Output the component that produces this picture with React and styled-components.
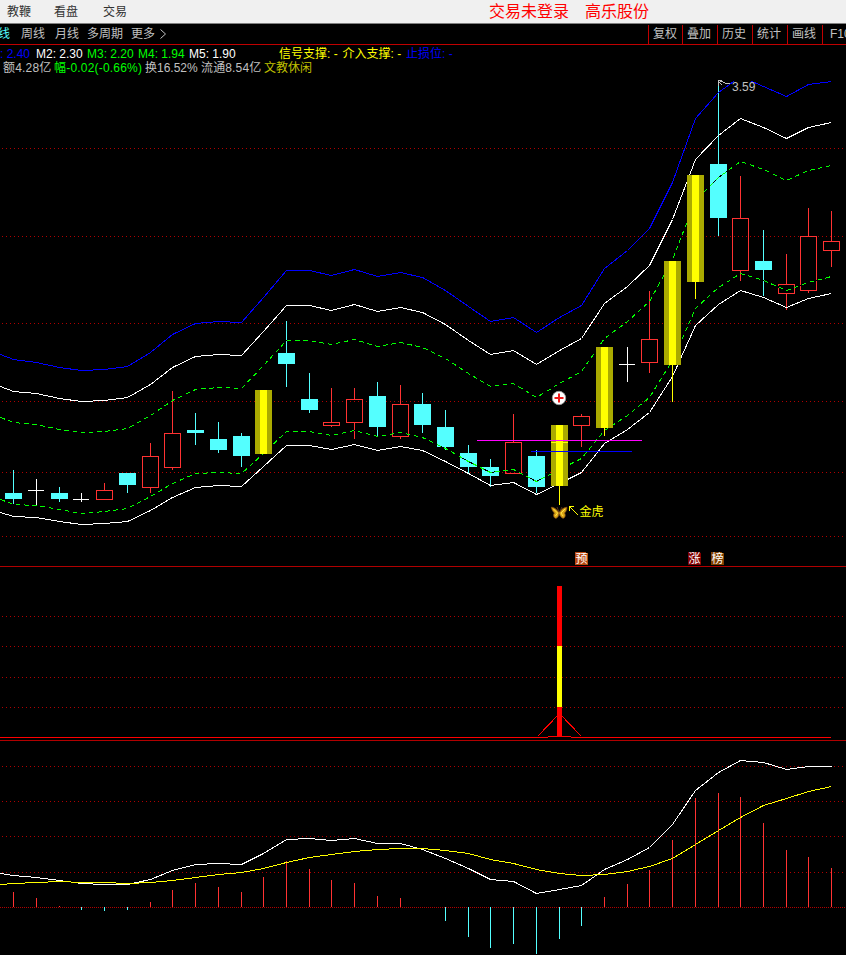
import React, { Component } from 'react'

import styled, { createGlobalStyle } from 'styled-components'

const GlobalStyle = createGlobalStyle`
  body {
    margin: 0;
    background: #000;
    overflow: hidden;
  }
`

const Screen = styled.div`
  width: 846px;
  height: 955px;
  display: flex;
  flex-direction: column;
  overflow: hidden;
  background: #000;
  color: #c0c0c0;
  font-family: 'Liberation Sans', 'Noto Sans CJK SC', sans-serif;
  font-size: 12px;
  line-height: 14px;
  white-space: pre;
`

const MenuBar = styled.header`
  display: flex;
  flex: none;
  align-items: center;
  box-sizing: border-box;
  height: 24px;
  padding: 1px 0 0 7px;
  background: #f0f0f0;
  border-bottom: 1px solid #808080;
  color: #333;
`

const MenuItem = styled.span`
  flex: none;
  width: ${props => props.$width}px;
`

const Title = styled.span`
  display: flex;
  gap: 16px;
  margin-left: 338px;
  color: #f00;
  font-size: 16px;
  line-height: 22px;
`

const ToolBar = styled.nav`
  display: flex;
  flex: none;
  justify-content: space-between;
  box-sizing: border-box;
  height: 21px;
  border-bottom: 1px solid #c00000;
`

const Periods = styled.div`
  display: flex;
  align-items: center;
  margin-left: -2px;
`

const Period = styled.span`
  margin-right: ${props => props.$gap}px;
  color: ${props => props.$active ? '#54ffff' : '#c0c0c0'};
`

const Tools = styled.div`
  display: flex;
  width: 198px;
  padding-top: 1px;
  overflow: hidden;
`

const Tool = styled.span`
  flex: none;
  box-sizing: border-box;
  width: ${props => props.$width || 35}px;
  padding-left: ${props => props.$inset || 4}px;
  border-left: 1px solid #c00000;
  line-height: 18px;
`

const Legend = styled.div`
  display: flex;
  flex: none;
  flex-direction: column;
  box-sizing: border-box;
  height: 29px;
  padding-top: 2px;
`

const LegendRow = styled.div`
  display: flex;
  flex: none;
  height: 14px;
  padding-left: ${props => props.$inset || 0}px;
`

const Value = styled.span`
  flex: none;
  width: ${props => props.$width}px;
  color: ${props => props.$color};
  letter-spacing: ${props => props.$spacing || 0}px;
`

const Panel = styled.section`
  flex: none;
  height: ${props => props.$height}px;
  border-bottom: ${props => props.$last ? 'none' : '1px solid #b00000'};
`

const Chart = styled.svg`
  display: block;
  shape-rendering: crispEdges;
`

const Curve = styled.polyline`
  fill: none;
  stroke: ${props => props.$color};
  stroke-width: 1;
  stroke-dasharray: ${props => props.$dashed ? '4.5 3.7' : 'none'};
`

const ChartText = styled.text`
  font-size: 12px;
  fill: ${props => props.$color};
`

const RED = '#ff3232'
const CYAN = '#54ffff'

// centre pixel of every trading day
const DAYS = [
  13, 36, 59, 81, 104, 127, 150, 172, 195, 218, 241, 263, 286, 309, 331, 354, 377, 400, 422,
  445, 468, 490, 513, 536, 559, 581, 604, 627, 649, 672, 695, 718, 740, 763, 786, 808, 831
]

// kind, high, body top, body bottom, low
const CANDLES = [
  ['down', 470, 493, 499, 505],
  ['flat', 479, 490, 491, 505],
  ['down', 487, 493, 499, 502],
  ['flat', 493, 499, 500, 502],
  ['up', 483, 490, 500, 500],
  ['down', 473, 473, 485, 493],
  ['up', 443, 456, 488, 493],
  ['up', 391, 433, 468, 470],
  ['down', 413, 430, 433, 445],
  ['down', 422, 439, 450, 453],
  ['down', 433, 436, 456, 467],
  ['limit', 390, 390, 454, 454],
  ['down', 321, 353, 364, 387],
  ['down', 373, 399, 410, 413],
  ['up', 388, 422, 426, 427],
  ['up', 388, 399, 423, 439],
  ['down', 382, 396, 427, 436],
  ['up', 385, 404, 437, 439],
  ['down', 393, 404, 425, 433],
  ['down', 410, 427, 447, 450],
  ['down', 445, 453, 467, 473],
  ['down', 459, 467, 476, 487],
  ['up', 414, 442, 474, 474],
  ['down', 450, 456, 487, 493],
  ['limit', 425, 425, 486, 505],
  ['up', 414, 416, 426, 447],
  ['limit', 347, 347, 428, 436],
  ['flat', 347, 364, 365, 382],
  ['up', 291, 339, 363, 373],
  ['limit', 261, 261, 365, 402],
  ['limit', 175, 175, 282, 299],
  ['down', 82, 164, 218, 236],
  ['up', 176, 218, 271, 281],
  ['down', 230, 261, 270, 296],
  ['up', 254, 284, 294, 310],
  ['up', 208, 236, 291, 293],
  ['up', 211, 241, 251, 267]
]

// the first value of each curve is where it enters at the left edge
const TOP_BAND = [
  354, 359, 362, 367, 370, 369, 366, 352, 334, 323, 321, 322, 297, 270, 270, 275, 269, 276, 272, 277,
  290, 306, 321, 317, 332, 317, 305, 268, 250, 228, 182, 118, 92, 76, 86, 96, 84, 81
]
const UPPER_BAND = [
  386, 391, 393, 398, 401, 400, 397, 384, 367, 356, 354, 355, 331, 305, 305, 310, 304, 311, 307, 312,
  324, 340, 354, 350, 364, 350, 338, 303, 286, 265, 219, 159, 135, 118, 127, 138, 127, 122
]
const UPPER_MID = [
  417, 422, 424, 429, 432, 431, 428, 415, 400, 389, 387, 388, 365, 340, 340, 344, 339, 346, 342, 347,
  358, 373, 386, 383, 397, 383, 371, 338, 321, 301, 259, 200, 177, 161, 169, 180, 170, 165
]
const LOWER_MID = [
  499, 504, 505, 509, 513, 511, 508, 496, 483, 473, 472, 473, 453, 431, 431, 435, 430, 436, 432, 437,
  448, 461, 472, 469, 481, 469, 458, 430, 415, 397, 360, 308, 287, 273, 280, 290, 282, 276
]
const LOWER_BAND = [
  512, 516, 517, 521, 524, 523, 521, 510, 497, 487, 485, 486, 466, 445, 445, 449, 444, 450, 446, 450,
  461, 473, 485, 482, 494, 483, 472, 443, 429, 412, 376, 325, 304, 290, 297, 307, 298, 293
]
const DIF = [
  873, 875, 877, 880, 883, 884, 884, 879, 870, 864, 863, 864, 853, 839, 838, 840, 838, 843, 843, 849,
  858, 868, 879, 881, 893, 889, 885, 869, 859, 847, 824, 790, 772, 760, 762, 769, 766, 766
]
const DEA = [
  884, 883, 882, 881, 882, 882, 883, 882, 880, 877, 874, 872, 868, 862, 857, 854, 851, 849, 848, 848,
  850, 853, 859, 863, 869, 873, 875, 874, 871, 866, 858, 844, 830, 817, 805, 798, 791, 786
]
const MACD = [
  892, 898, 906, 910, 911, 910, 902, 890, 883, 887, 892, 877, 861, 869, 880, 883, 896, 898, 907,
  921, 937, 948, 944, 954, 939, 926, 897, 884, 870, 840, 798, 793, 797, 823, 850, 857, 868
]

const toPoints = values => values
  .map((y, i) => `${(i ? DAYS[i - 1] : 0) + 0.5},${y + 0.5}`)
  .join(' ')

const GridLines = ({ rows }) => rows.map(y => (
  <line key={y} x1='2' x2='843' y1={y + 0.5} y2={y + 0.5} stroke='#b00000' strokeDasharray='1 3' />
))

const Candle = ({ x, data }) => {
  const [kind, high, top, bottom, low] = data
  const height = bottom - top
  if (kind === 'flat') {
    return (
      <g fill='#fff'>
        <rect x={x} y={high} width='1' height={low - high} />
        <rect x={x - 8} y={top} width='16' height='1' />
      </g>
    )
  }
  if (kind === 'limit') {
    return (
      <g fill='#ff0'>
        <rect x={x} y={high} width='1' height={low - high} />
        <rect x={x - 8} y={top} width='17' height={height} fill='#aaaa00' />
        <rect x={x - 3} y={top} width='7' height={height} />
      </g>
    )
  }
  if (kind === 'up') {
    return (
      <g fill={RED}>
        <rect x={x} y={high} width='1' height={top - high} />
        <rect x={x} y={bottom} width='1' height={low - bottom} />
        <rect x={x - 7.5} y={top + 0.5} width='16' height={height - 1} fill='none' stroke={RED} />
      </g>
    )
  }
  return (
    <g fill={CYAN}>
      <rect x={x} y={high} width='1' height={low - high} />
      <rect x={x - 8} y={top} width='17' height={height} />
    </g>
  )
}

const DashedCurve = ({ values }) => (
  <g>
    <Curve points={toPoints(values)} $color='#000' />
    <Curve points={toPoints(values)} $color='#0f0' $dashed />
  </g>
)

const Tag = ({ x, color, children }) => (
  <g>
    <path d={`M${x} 552h11v1h2v12h-13z`} fill={color} />
    <ChartText x={x + 0.5} y='563' $color='#fff'>{children}</ChartText>
  </g>
)

const CrossMark = () => (
  <g shapeRendering='auto'>
    <circle cx='559' cy='398' r='6.7' fill='#fff' stroke='#999' />
    <path d='M559 393.5v9M554.5 398h9' stroke='#f01818' strokeWidth='2' />
  </g>
)

const Butterfly = () => (
  <g shapeRendering='auto'>
    <path d='M558.5 512C556 508.500 553 507 551.300 507.300C552 509.500 552.500 511.500 554.500 513C552.500 515 554 518.500 556 518.300C557.500 518 558.500 516 559.300 514C560.200 516 561.500 518 563 518.200C565 518.300 566 515 564.500 513C566.500 511.500 566.800 509 567 507.300C564.500 507.200 561.500 509 559.800 512z' fill='#dba514' stroke='#865016' strokeWidth='.8' />
    <path d='M553.5 509l4 4-2 3M565 509l-4 4 2 3' fill='none' stroke='#ffe14a' />
    <path d='M559 516v-4l-2-5M559.500 512l2.500-5' fill='none' stroke='#70401c' strokeWidth='.8' />
  </g>
)

const PriceChart = () => (
  <Chart width='846' height='492' viewBox='0 74 846 492'>
    <clipPath id='plot'>
      <rect x='0' y='81' width='846' height='485' />
    </clipPath>
    <GridLines rows={[148, 236, 323, 401, 472, 536]} />
    {CANDLES.map((data, i) => data[0] !== 'limit' && <Candle key={i} x={DAYS[i]} data={data} />)}
    <g clipPath='url(#plot)'>
      <Curve points={toPoints(TOP_BAND)} $color='#00f' />
      <Curve points={toPoints(UPPER_BAND)} $color='#fff' />
      <DashedCurve values={UPPER_MID} />
      <DashedCurve values={LOWER_MID} />
      <Curve points={toPoints(LOWER_BAND)} $color='#fff' />
    </g>
    {CANDLES.map((data, i) => data[0] === 'limit' && <Candle key={i} x={DAYS[i]} data={data} />)}
    <rect x='551' y='442' width='17' height='1' fill='#ff0' />
    <rect x='477' y='440' width='165' height='1' fill='#f0f' />
    <rect x='531' y='451' width='101' height='1' fill='#00f' />
    <path d='M718.500 85.500v-5h3M719.500 81.500h3l3 2h4M719 82.500l3 2' fill='none' stroke='#c0c0c0' />
    <ChartText x='732' y='91' $color='#c0c0c0'>3.59</ChartText>
    <CrossMark />
    <Butterfly />
    <path d='M569.500 510.500v-4h4M570 507l8 8' fill='none' stroke='#ff0' />
    <ChartText x='579.500' y='516' $color='#ff0'>金虎</ChartText>
    <Tag x={575} color='#b84810'>预</Tag>
    <Tag x={688} color='#800000'>涨</Tag>
    <Tag x={711} color='#804000'>榜</Tag>
  </Chart>
)

const SignalChart = () => (
  <Chart width='846' height='173' viewBox='0 567 846 173'>
    <GridLines rows={[616, 646, 677, 707]} />
    <path d='M0 737.500H548M571 737.500H831' stroke='#f00' />
    <path d='M537.500 736.500L559.500 713.500L581.500 736.500' fill='none' stroke='#f00' />
    <rect x='548' y='736' width='23' height='1' fill='#f00' />
    <rect x='557' y='586' width='5' height='151' fill='#f00' />
    <rect x='557' y='646' width='5' height='61' fill='#ff0' />
  </Chart>
)

const MacdChart = () => (
  <Chart width='846' height='214' viewBox='0 741 846 214'>
    <GridLines rows={[766, 801, 836, 872]} />
    <line x1='0' x2='846' y1='907.5' y2='907.5' stroke='#b00000' strokeDasharray='1 1' />
    <Curve points={toPoints(DIF)} $color='#fff' />
    {MACD.map((y, i) => (
      <rect
        key={i}
        x={DAYS[i]}
        y={Math.min(y, 907)}
        width='1'
        height={Math.abs(907 - y)}
        fill={y < 907 ? RED : CYAN}
      />
    ))}
    <Curve points={toPoints(DEA)} $color='#ff0' />
  </Chart>
)

class App extends Component {
  render () {
    return (
      <Screen>
        <GlobalStyle />
        <MenuBar>
          <MenuItem $width={47}>教鞭</MenuItem>
          <MenuItem $width={49}>看盘</MenuItem>
          <MenuItem $width={48}>交易</MenuItem>
          <Title>
            <span>交易未登录</span>
            <span>高乐股份</span>
          </Title>
        </MenuBar>
        <ToolBar>
          <Periods>
            <Period $gap={11} $active>线</Period>
            <Period $gap={10}>周线</Period>
            <Period $gap={8}>月线</Period>
            <Period $gap={8}>多周期</Period>
            <Period $gap={4}>更多</Period>
            <svg width='8' height='10' viewBox='0 0 8 10'>
              <path d='M1.500 .5l5 4.500-5 4.500' fill='none' stroke='#c0c0c0' />
            </svg>
          </Periods>
          <Tools>
            <Tool $width={34}>复权</Tool>
            <Tool>叠加</Tool>
            <Tool>历史</Tool>
            <Tool>统计</Tool>
            <Tool>画线</Tool>
            <Tool $inset={7}>F10</Tool>
          </Tools>
        </ToolBar>
        <Legend>
          <LegendRow>
            <Value $color='#00f' $width={36}>: 2.40</Value>
            <Value $color='#fff' $width={51}>M2: 2.30</Value>
            <Value $color='#0f0' $width={51}>M3: 2.20</Value>
            <Value $color='#0f0' $width={51}>M4: 1.94</Value>
            <Value $color='#fff' $width={90}>M5: 1.90</Value>
            <Value $color='#ff0' $width={63.5}>信号支撑: -</Value>
            <Value $color='#ff0' $width={63.5}>介入支撑: -</Value>
            <Value $color='#00f' $width={50}>止损位: -</Value>
          </LegendRow>
          <LegendRow $inset={3}>
            <Value $color='#c0c0c0' $width={51} $spacing={0.2}>额4.28亿</Value>
            <Value $color='#0f0' $width={91} $spacing={0.2}>幅-0.02(-0.66%)</Value>
            <Value $color='#c0c0c0' $width={56}>换16.52%</Value>
            <Value $color='#c0c0c0' $width={63} $spacing={0.15}>流通8.54亿</Value>
            <Value $color='#c0c000' $width={50}>文教休闲</Value>
          </LegendRow>
        </Legend>
        <Panel $height={492}>
          <PriceChart />
        </Panel>
        <Panel $height={173}>
          <SignalChart />
        </Panel>
        <Panel $height={214} $last>
          <MacdChart />
        </Panel>
      </Screen>
    )
  }
}

export default App
